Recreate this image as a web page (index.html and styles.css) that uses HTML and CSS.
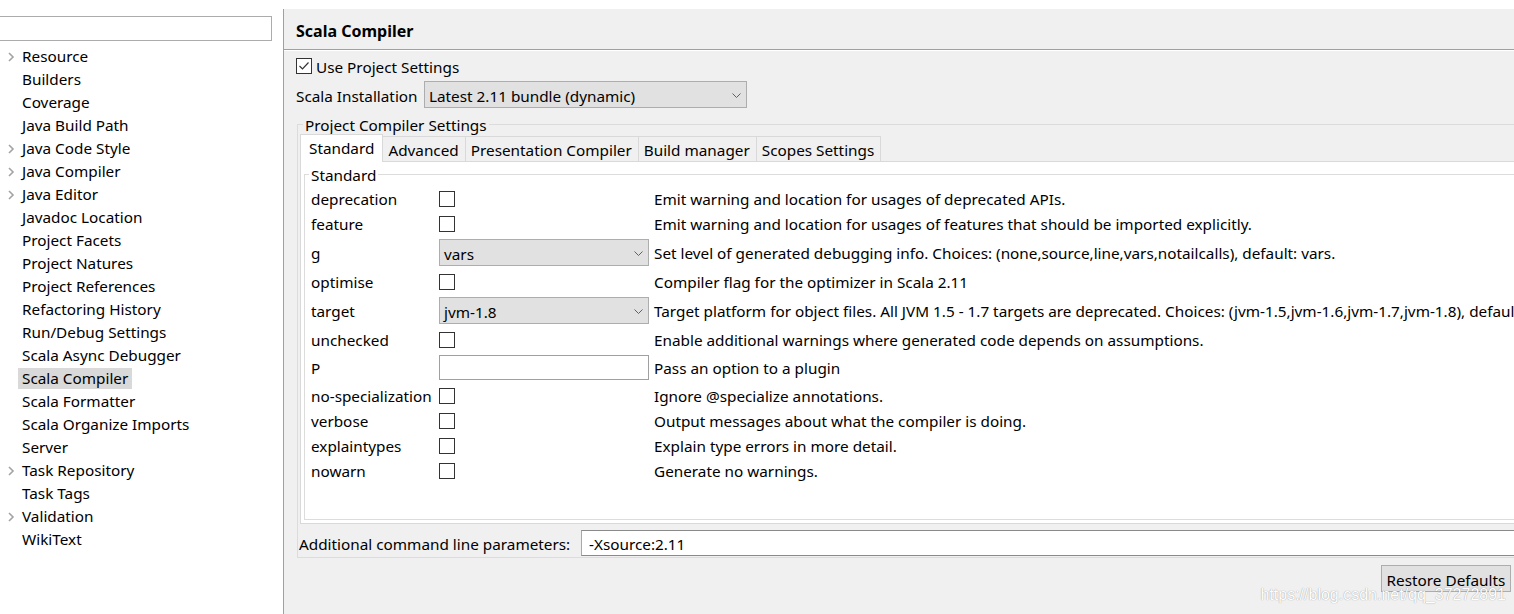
FILE: index.html
```html
<!DOCTYPE html>
<html>
<head>
<meta charset="utf-8">
<title>Properties - Scala Compiler</title>
<link rel="stylesheet" href="styles.css">
</head>
<body>
<div class="window">
  <aside class="nav">
    <div class="filter"></div>
    <ul class="tree">
      <li class="tree-item"><svg class="twisty" viewBox="0 0 8 10"><polyline points="2,1 6,5 2,9"/></svg><span class="label">Resource</span></li>
      <li class="tree-item"><span class="twisty"></span><span class="label">Builders</span></li>
      <li class="tree-item"><span class="twisty"></span><span class="label">Coverage</span></li>
      <li class="tree-item"><span class="twisty"></span><span class="label">Java Build Path</span></li>
      <li class="tree-item"><svg class="twisty" viewBox="0 0 8 10"><polyline points="2,1 6,5 2,9"/></svg><span class="label">Java Code Style</span></li>
      <li class="tree-item"><svg class="twisty" viewBox="0 0 8 10"><polyline points="2,1 6,5 2,9"/></svg><span class="label">Java Compiler</span></li>
      <li class="tree-item"><svg class="twisty" viewBox="0 0 8 10"><polyline points="2,1 6,5 2,9"/></svg><span class="label">Java Editor</span></li>
      <li class="tree-item"><span class="twisty"></span><span class="label">Javadoc Location</span></li>
      <li class="tree-item"><span class="twisty"></span><span class="label">Project Facets</span></li>
      <li class="tree-item"><span class="twisty"></span><span class="label">Project Natures</span></li>
      <li class="tree-item"><span class="twisty"></span><span class="label">Project References</span></li>
      <li class="tree-item"><span class="twisty"></span><span class="label">Refactoring History</span></li>
      <li class="tree-item"><span class="twisty"></span><span class="label">Run/Debug Settings</span></li>
      <li class="tree-item"><span class="twisty"></span><span class="label">Scala Async Debugger</span></li>
      <li class="tree-item selected"><span class="twisty"></span><span class="label">Scala Compiler</span></li>
      <li class="tree-item"><span class="twisty"></span><span class="label">Scala Formatter</span></li>
      <li class="tree-item"><span class="twisty"></span><span class="label">Scala Organize Imports</span></li>
      <li class="tree-item"><span class="twisty"></span><span class="label">Server</span></li>
      <li class="tree-item"><svg class="twisty" viewBox="0 0 8 10"><polyline points="2,1 6,5 2,9"/></svg><span class="label">Task Repository</span></li>
      <li class="tree-item"><span class="twisty"></span><span class="label">Task Tags</span></li>
      <li class="tree-item"><svg class="twisty" viewBox="0 0 8 10"><polyline points="2,1 6,5 2,9"/></svg><span class="label">Validation</span></li>
      <li class="tree-item"><span class="twisty"></span><span class="label">WikiText</span></li>
    </ul>
  </aside>

  <main class="page">
    <header class="page-title">Scala Compiler</header>
    <div class="page-body">
      <div class="use-project">
        <span class="cb"><svg viewBox="0 0 14 14" class="tick"><polyline points="2.5,7 5.5,10 11.5,3.5"/></svg></span>
        <span class="row-text">Use Project Settings</span>
      </div>
      <div class="install-row">
        <span class="field-label row-text">Scala Installation</span>
        <div class="combo wide"><span>Latest 2.11 bundle (dynamic)</span><svg class="drop" viewBox="0 0 9 5"><polyline points="0.5,0.5 4.5,4.5 8.5,0.5"/></svg></div>
      </div>

      <fieldset class="group outer">
        <legend>Project Compiler Settings</legend>
        <div class="tabs">
          <div class="tab active">Standard</div>
          <div class="tab">Advanced</div>
          <div class="tab">Presentation Compiler</div>
          <div class="tab">Build manager</div>
          <div class="tab">Scopes Settings</div>
        </div>
        <div class="tab-body">
          <fieldset class="group inner">
            <legend>Standard</legend>
            <div class="opts">
              <span class="opt-label">deprecation</span><span class="cb"></span><span class="desc">Emit warning and location for usages of deprecated APIs.</span>
              <span class="opt-label">feature</span><span class="cb"></span><span class="desc">Emit warning and location for usages of features that should be imported explicitly.</span>
              <span class="opt-label">g</span><div class="combo narrow"><span>vars</span><svg class="drop" viewBox="0 0 9 5"><polyline points="0.5,0.5 4.5,4.5 8.5,0.5"/></svg></div><span class="desc">Set level of generated debugging info. Choices: (none,source,line,vars,notailcalls), default: vars.</span>
              <span class="opt-label">optimise</span><span class="cb"></span><span class="desc">Compiler flag for the optimizer in Scala 2.11</span>
              <span class="opt-label">target</span><div class="combo narrow"><span>jvm-1.8</span><svg class="drop" viewBox="0 0 9 5"><polyline points="0.5,0.5 4.5,4.5 8.5,0.5"/></svg></div><span class="desc">Target platform for object files. All JVM 1.5 - 1.7 targets are deprecated. Choices: (jvm-1.5,jvm-1.6,jvm-1.7,jvm-1.8), default: jvm-1.6.</span>
              <span class="opt-label">unchecked</span><span class="cb"></span><span class="desc">Enable additional warnings where generated code depends on assumptions.</span>
              <span class="opt-label">P</span><span class="text-input"></span><span class="desc">Pass an option to a plugin</span>
              <span class="opt-label">no-specialization</span><span class="cb"></span><span class="desc">Ignore @specialize annotations.</span>
              <span class="opt-label">verbose</span><span class="cb"></span><span class="desc">Output messages about what the compiler is doing.</span>
              <span class="opt-label">explaintypes</span><span class="cb"></span><span class="desc">Explain type errors in more detail.</span>
              <span class="opt-label">nowarn</span><span class="cb"></span><span class="desc">Generate no warnings.</span>
            </div>
          </fieldset>
        </div>
        <div class="params-row">
          <span class="params-label row-text">Additional command line parameters:</span>
          <div class="params-input">-Xsource:2.11</div>
        </div>
      </fieldset>

      <div class="button-row">
        <button class="btn" type="button">Restore Defaults</button>
      </div>
    </div>
    <div class="watermark">https://blog.csdn.net/qq_37272891</div>
  </main>
</div>
</body>
</html>
```
FILE: styles.css
```css
html, body {
  margin: 0;
  height: 614px;
  overflow: hidden;
  background: #fff;
  color: #000;
  font-family: "Noto Sans", "Open Sans", sans-serif;
  font-size: 15.3px;
}

.window {
  display: flex;
  height: 614px;
}

/* ---------- left navigation ---------- */
.nav {
  width: 283px;
  flex: none;
  background: #fff;
}
.filter {
  margin: 16px 0 0 -1px;
  width: 273px;
  height: 25px;
  box-sizing: border-box;
  border: 1px solid #acacac;
  background: #fff;
}
.tree {
  list-style: none;
  margin: 4px 0 0;
  padding: 0;
}
.tree-item {
  display: flex;
  align-items: center;
  height: 23px;
  padding-left: 7px;
  white-space: nowrap;
}
.twisty {
  width: 8px;
  height: 10px;
  flex: none;
  margin-right: 7px;
}
.twisty polyline {
  fill: none;
  stroke: #a3a3a3;
  stroke-width: 1.6;
}
.label {
  padding: 0 4px;
  margin-left: -4px;
  line-height: 21px;
}
.tree-item.selected .label {
  background: #d9d9d9;
}

/* ---------- right page ---------- */
.page {
  flex: 1;
  min-width: 0;
  margin-top: 9px;
  border-left: 1px solid #a0a0a0;
  background: #f0f0f0;
  position: relative;
  overflow: hidden;
}
.page-title {
  height: 41px;
  box-sizing: border-box;
  padding: 3px 0 0 12px;
  display: flex;
  align-items: center;
  font-weight: 700;
  font-size: 16px;
  border-bottom: 1px solid #a0a0a0;
  box-shadow: 0 1px 0 #fff;
}
.page-body {
  padding: 0 3px 0 12px;
}
.row-text {
  padding-top: 2px;
}

.use-project {
  display: flex;
  align-items: center;
  gap: 4px;
  height: 24px;
  margin-top: 4px;
  white-space: nowrap;
}
.cb {
  width: 16px;
  height: 16px;
  box-sizing: border-box;
  border: 1px solid #333;
  background: #fff;
  display: flex;
  align-items: center;
  justify-content: center;
}
.tick {
  width: 14px;
  height: 14px;
}
.tick polyline {
  fill: none;
  stroke: #333;
  stroke-width: 1.2;
}

.install-row {
  display: flex;
  align-items: center;
  margin-top: 3px;
  white-space: nowrap;
}
.field-label {
  width: 128px;
  flex: none;
}
.combo {
  height: 27px;
  box-sizing: border-box;
  border: 1px solid #adadad;
  background: #e1e1e1;
  display: flex;
  align-items: center;
  justify-content: space-between;
  padding: 2px 5px 0 4px;
  white-space: nowrap;
}
.combo.wide { width: 323px; }
.combo.narrow { width: 210px; }
.drop {
  width: 9px;
  height: 5px;
  flex: none;
}
.drop polyline {
  fill: none;
  stroke: #606060;
  stroke-width: 1;
}

/* group boxes */
.group {
  margin: 0;
  padding: 0;
  min-width: 0;
  border: 1px solid #dcdcdc;
}
.group > legend {
  padding: 2px 2px 0 2px;
  line-height: 18px;
  white-space: nowrap;
}
.outer {
  margin: 6px 0 0 1px;
  width: 1400px;
  box-sizing: border-box;
  padding: 0 2px 1px 2px;
}
.outer > legend {
  margin-left: 3px;
}

/* tabs */
.tabs {
  display: flex;
  align-items: flex-end;
  height: 27px;
  white-space: nowrap;
}
.tab {
  height: 25px;
  box-sizing: border-box;
  padding: 2px 6px 0 5px;
  border-top: 1px solid #d9d9d9;
  border-right: 1px solid #d9d9d9;
  background: #f0f0f0;
  display: flex;
  align-items: center;
}
.tab.active {
  height: 28px;
  margin-bottom: -1px;
  padding: 2px 8px 3px 8px;
  background: #fff;
  border-left: 1px solid #d9d9d9;
  position: relative;
  z-index: 1;
}
.tab-body {
  height: 363px;
  box-sizing: border-box;
  border: 1px solid #d9d9d9;
  background: #fff;
  padding: 2px 3px 3px 3px;
  display: flex;
  flex-direction: column;
}
.inner {
  flex: 1;
  padding: 5px 0 0 0;
}
.inner > legend {
  margin-left: 4px;
}

.opts {
  display: grid;
  grid-template-columns: 128px 210px max-content;
  row-gap: 6px;
  align-items: center;
  margin-left: 6px;
  white-space: nowrap;
}
.opt-label,
.desc {
  line-height: 17px;
  padding-top: 2px;
}
.desc {
  padding-left: 5px;
}
.text-input {
  width: 210px;
  height: 25px;
  box-sizing: border-box;
  border: 1px solid #a0a0a0;
  background: #fff;
}

.params-row {
  display: flex;
  align-items: center;
  margin: 6px 0 0 -1px;
  white-space: nowrap;
}
.params-label {
  width: 282px;
  flex: none;
}
.params-input {
  flex: 1;
  height: 26px;
  box-sizing: border-box;
  border: 1px solid #8a8a8a;
  border-left-color: #a8a8a8;
  background: #fff;
  padding: 2px 0 0 7px;
  display: flex;
  align-items: center;
}

.button-row {
  display: flex;
  justify-content: flex-end;
  margin-top: 7px;
}
.btn {
  width: 130px;
  height: 27px;
  padding: 2px 0 0;
  border: 1px solid #adadad;
  background: #e1e1e1;
  color: #000;
  font: inherit;
}

.watermark {
  position: absolute;
  right: 8px;
  bottom: 10px;
  line-height: 18px;
  font-family: "Liberation Sans", Arial, sans-serif;
  font-size: 16px;
  color: #fff;
  text-shadow: 0 0 1px rgba(0, 0, 0, 0.45);
  pointer-events: none;
}
```
